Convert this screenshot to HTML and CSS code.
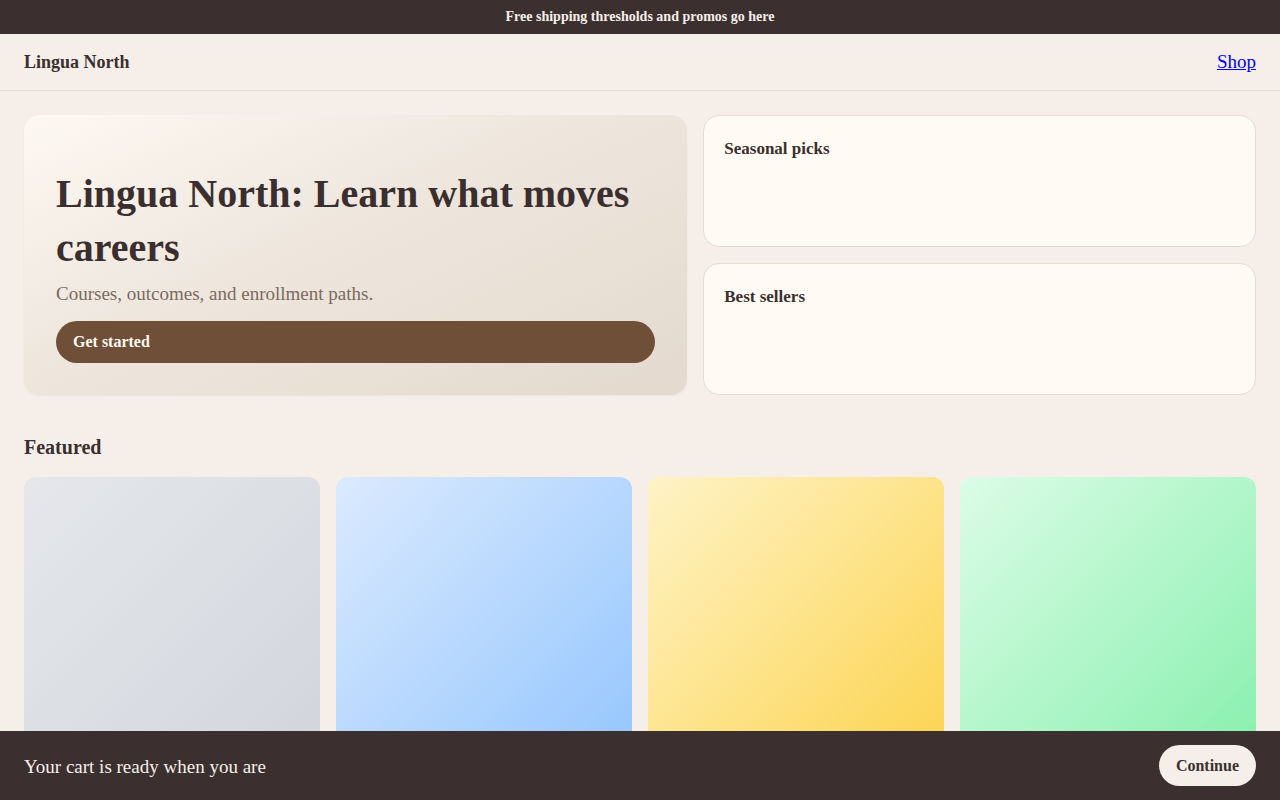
FILE: index.html
```html
<!DOCTYPE html>
<html lang="en">
<head>
<meta charset="utf-8">
<title>Lingua North</title>
<link rel="stylesheet" href="styles.css">
</head>
<body>
<div class="promo">Free shipping thresholds and promos go here</div>
<header class="site-header">
  <div class="brand">Lingua North</div>
  <nav><a href="#" class="nav-link">Shop</a></nav>
</header>
<main class="main">
  <section class="top-grid">
    <div class="hero">
      <h1 class="hero-title">Lingua North: Learn what moves careers</h1>
      <p class="hero-sub">Courses, outcomes, and enrollment paths.</p>
      <a href="#" class="hero-btn">Get started</a>
    </div>
    <div class="side">
      <div class="side-card"><h3 class="side-title">Seasonal picks</h3></div>
      <div class="side-card"><h3 class="side-title">Best sellers</h3></div>
    </div>
  </section>
  <section class="featured">
    <h2 class="featured-title">Featured</h2>
    <div class="product-grid">
      <div class="product p-gray"></div>
      <div class="product p-blue"></div>
      <div class="product p-yellow"></div>
      <div class="product p-green"></div>
    </div>
  </section>
</main>
<div class="cart-bar">
  <span class="cart-text">Your cart is ready when you are</span>
  <a href="#" class="cart-btn">Continue</a>
</div>
</body>
</html>
```

FILE: styles.css
```css
* { box-sizing: border-box; }
html, body { margin: 0; padding: 0; }
body {
  background: #f6efe9;
  color: #3a2f2e;
  font-family: "Liberation Serif", "DejaVu Serif", serif;
}
.promo {
  background: #3b2f2f;
  color: #f6efe9;
  height: 34px;
  display: flex;
  align-items: center;
  justify-content: center;
  font-size: 14px;
  font-weight: 700;
}
.site-header {
  height: 57px;
  display: flex;
  align-items: center;
  justify-content: space-between;
  padding: 0 24px;
  border-bottom: 1px solid #e2d9d0;
}
.brand {
  font-size: 18px;
  font-weight: 700;
}
.nav-link {
  color: #0000ee;
  font-size: 19px;
}
.main {
  padding: 24px 24px 120px;
}
.top-grid {
  display: grid;
  grid-template-columns: 1.2fr 1fr;
  gap: 16px;
}
.hero {
  height: 280px;
  border-radius: 16px;
  background: linear-gradient(155deg, #fdf8f2 0%, #eee6dd 45%, #e3d9ce 100%);
  padding: 32px;
  display: flex;
  flex-direction: column;
  justify-content: flex-end;
  box-shadow: 0 1px 2px rgba(58, 47, 46, 0.06);
}
.hero-title {
  margin: 0 0 6px;
  font-size: 40px;
  line-height: 54px;
  font-weight: 700;
  color: #3a2f2e;
}
.hero-sub {
  margin: 0 0 14px;
  font-size: 19px;
  line-height: 26px;
  color: #7a6a5f;
}
.hero-btn {
  display: flex;
  align-items: center;
  height: 42px;
  padding: 0 17px;
  border-radius: 21px;
  background: #6f4f37;
  color: #fffaf3;
  font-weight: 700;
  font-size: 16px;
  text-decoration: none;
}
.side {
  display: grid;
  grid-template-rows: 1fr 1fr;
  gap: 16px;
}
.side-card {
  background: #fffaf3;
  border: 1px solid #e5dcd2;
  border-radius: 16px;
  padding: 21px 20px 20px;
}
.side-title {
  margin: 0;
  font-size: 17px;
  line-height: 24px;
  font-weight: 700;
}
.featured {
  margin-top: 38px;
}
.featured-title {
  margin: 0 0 16px;
  font-size: 20px;
  line-height: 28px;
  font-weight: 700;
}
.product-grid {
  display: grid;
  grid-template-columns: repeat(4, 1fr);
  gap: 16px;
}
.product {
  aspect-ratio: 1 / 1;
  border-radius: 12px;
}
.p-gray { background: linear-gradient(135deg, #e5e7eb, #d1d5db); }
.p-blue { background: linear-gradient(135deg, #dbeafe, #93c5fd); }
.p-yellow { background: linear-gradient(135deg, #fef3c7, #fcd34d); }
.p-green { background: linear-gradient(135deg, #dcfce7, #86efac); }
.cart-bar {
  position: fixed;
  left: 0;
  right: 0;
  bottom: 0;
  height: 69px;
  background: #3b2f2f;
  color: #f6efe9;
  display: flex;
  align-items: center;
  justify-content: space-between;
  padding: 0 24px;
}
.cart-text {
  font-size: 19px;
  padding-top: 3px;
}
.cart-btn {
  display: flex;
  align-items: center;
  height: 41px;
  padding: 0 17px;
  border-radius: 21px;
  background: #f6efe9;
  color: #3a2f2e;
  font-weight: 700;
  font-size: 16px;
  text-decoration: none;
}
```
